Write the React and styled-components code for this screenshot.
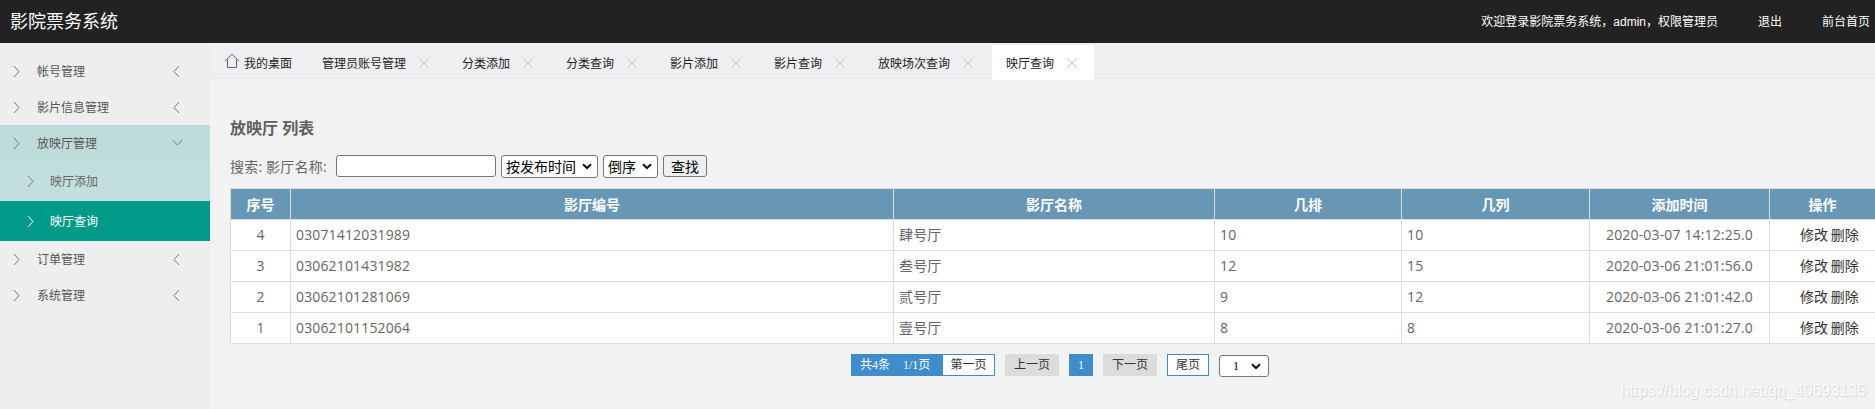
import React from 'react';
import styled, { createGlobalStyle } from 'styled-components';

const arrow = encodeURIComponent('<svg xmlns="http://www.w3.org/2000/svg" width="10" height="7" viewBox="0 0 10 7"><polyline points="1,1.2 5,5 9,1.2" fill="none" stroke="#111" stroke-width="2"/></svg>')

const GlobalStyle = createGlobalStyle`
    html, body {
        margin: 0;
        padding: 0;
        height: 100%;
        overflow: hidden;
        background: #f1f1f1;
    }
    body {
        font-family: "Open Sans", "Noto Sans CJK SC", sans-serif;
        font-size: 12px;
        color: #333;
    }
    * {
        box-sizing: border-box;
    }
`

const Page = styled.div`
    position: relative;
    width: 1875px;
    height: 409px;
    display: flex;
    flex-flow: column nowrap;
    overflow: hidden;
`
const TopBar = styled.header`
    height: 43px;
    flex: none;
    background: #222;
    color: #fff;
    display: flex;
    align-items: center;
    justify-content: space-between;
    padding: 0 5px 3px 10px;
`
const Logo = styled.div`
    font-size: 18px;
`
const TopLinks = styled.div`
    display: flex;
    gap: 40px;
    font-family: "Liberation Sans", "Noto Sans CJK SC", sans-serif;
    font-size: 12px;
`
const TopLink = styled.span``
const Body = styled.div`
    flex: 1;
    display: flex;
    min-height: 0;
`
const Sidebar = styled.aside`
    width: 210px;
    flex: none;
    background: #eee;
    padding-top: 10px;
`
const MenuRow = styled.div`
    height: 36px;
    display: flex;
    align-items: center;
    padding: 0 29px 0 12px;
    color: #555;
    background: ${props => props.$open ? '#bcdbd9' : 'transparent'};
`
const MenuText = styled.span`
    flex: 1;
    margin-left: 16px;
`
const SubRow = styled.div`
    height: 40px;
    display: flex;
    align-items: center;
    padding-left: 26px;
    color: ${props => props.$active ? '#fff' : '#666'};
    background: ${props => props.$active ? '#019a88' : '#c2dedd'};
`
const SubText = styled.span`
    margin-left: 15px;
`
const Main = styled.main`
    flex: 1;
    min-width: 0;
    display: flex;
    flex-flow: column nowrap;
`
const TabBar = styled.nav`
    height: 36px;
    flex: none;
    display: flex;
    padding-top: 2px;
    background: #efeff1;
    border-bottom: 1px solid #e4e5e9;
`
const Tab = styled.div`
    height: 35px;
    margin-right: 2px;
    padding: 0 ${props => props.$home ? 14 : 40}px 0 14px;
    position: relative;
    display: flex;
    align-items: center;
    flex: none;
    color: #222;
    background: ${props => props.$active ? '#fff' : 'transparent'};
`
const CloseMark = styled.svg`
    position: absolute;
    right: 17px;
    top: 13px;
    width: 10px;
    height: 10px;
`
const HomeMark = styled.svg`
    width: 16px;
    height: 16px;
    margin-right: 4px;
    margin-top: -3px;
`
const Content = styled.section`
    flex: 1;
    padding: 38px 0 0 20px;
    background: #f2f2f2;
`
const Title = styled.h2`
    margin: 0 0 16px;
    font-size: 16px;
    line-height: 22px;
    font-weight: bold;
    color: #5f5f5f;
`
const SearchRow = styled.div`
    height: 22px;
    display: flex;
    align-items: center;
    font-size: 14px;
    color: #666;
    margin-bottom: 11px;
`
const SearchLabel = styled.span`
    width: 106px;
    flex: none;
    letter-spacing: 0.2px;
`
const SearchInput = styled.input`
    width: 160px;
    height: 22px;
    margin-right: 5px;
    border: 1px solid #767676;
    border-radius: 3px;
    background: #fff;
`
const SearchSelect = styled.select`
    appearance: none;
    height: 23px;
    width: ${props => props.$width}px;
    margin-right: 5px;
    padding: 0 0 0 4px;
    font: 14px "Open Sans", "Noto Sans CJK SC", sans-serif;
    color: #000;
    background: #fff url("data:image/svg+xml,${arrow}") no-repeat right 5px center;
    border: 1px solid #767676;
    border-radius: 3px;
`
const SearchButton = styled.button`
    width: 44px;
    height: 22px;
    padding: 0;
    font: 14px "Open Sans", "Noto Sans CJK SC", sans-serif;
    color: #000;
    background: #efefef;
    border: 1px solid #767676;
    border-radius: 3px;
`
const Table = styled.table`
    width: 1645px;
    table-layout: fixed;
    border-collapse: collapse;
    background: #fff;
`
const HeadCell = styled.th`
    height: 31px;
    padding: 0 0 1px;
    font-size: 14px;
    font-weight: bold;
    color: #fff;
    background: #6897b5;
    border: 1px solid #ddd;
`
const Cell = styled.td`
    height: 31px;
    padding: 0 5px 2px;
    font-size: 14px;
    letter-spacing: 0.15px;
    color: #666;
    text-align: ${props => props.$center ? 'center' : 'left'};
    border: 1px solid #ddd;
`
const ActionCell = styled.td`
    height: 31px;
    padding: 0 0 2px 30px;
    font-size: 14px;
    word-spacing: -1px;
    color: #333;
    white-space: nowrap;
    border: 1px solid #ddd;
`
const Pager = styled.div`
    display: flex;
    align-items: flex-start;
    margin: 10px 0 0 621px;
    font-family: "Liberation Serif", "Noto Sans CJK SC", serif;
    font-size: 12px;
    line-height: 20px;
`
const PagerInfo = styled.span`
    height: 22px;
    width: 91px;
    display: flex;
    gap: 13px;
    padding: 1px 0 0 9px;
    color: #fff;
    background: #3f8ccb;
`
const PagerBox = styled.span`
    height: 22px;
    width: ${props => props.$width}px;
    margin-right: ${props => props.$gap}px;
    text-align: center;
    line-height: ${props => props.$outlined ? 20 : 22}px;
    color: ${props => props.$current ? '#fff' : '#333'};
    background: ${props => props.$current ? '#3f8ccb' : props.$outlined ? '#fff' : '#dcdcdc'};
    border: ${props => props.$outlined ? '1px solid #3f8ccb' : 'none'};
`
const PagerSelect = styled.select`
    appearance: none;
    width: 50px;
    height: 22px;
    margin-top: 1px;
    padding: 0 0 0 13px;
    font: 12px "Liberation Serif", serif;
    color: #000;
    background: #fff url("data:image/svg+xml,${arrow}") no-repeat right 7px center;
    border: 1px solid #767676;
    border-radius: 3px;
`
const Watermark = styled.div`
    position: absolute;
    right: 9px;
    bottom: 9px;
    font: 16px "Liberation Sans", sans-serif;
    color: rgba(255, 255, 255, 0.8);
    text-shadow: 1px 1px 1px rgba(185, 185, 185, 0.55);
`

const Chevron = ({ dir, color = '#777' }) => {
    const points = {
        right: '2,1 7,6.5 2,12',
        left: '7,1 2,6.5 7,12',
        down: '0.5,3 5.5,8 10.5,3',
    }
    const down = dir === 'down'
    return (
        <svg
            width={down ? 11 : 9}
            height="13"
            viewBox={down ? '0 0 11 13' : '0 0 9 13'}
            style={down ? { marginRight: -2 } : undefined}
        >
            <polyline points={points[dir]} fill="none" stroke={color} strokeWidth="1" />
        </svg>
    )
}

const menusTop = ['帐号管理', '影片信息管理']
const menusBottom = ['订单管理', '系统管理']
const tabs = ['管理员账号管理', '分类添加', '分类查询', '影片添加', '影片查询', '放映场次查询', '映厅查询']
const columns = [
    ['序号', 60], ['影厅编号', 603], ['影厅名称', 321], ['几排', 187], ['几列', 188], ['添加时间', 180], ['操作', 106],
]
const rows = [
    [4, '03071412031989', '肆号厅', 10, 10, '2020-03-07 14:12:25.0'],
    [3, '03062101431982', '叁号厅', 12, 15, '2020-03-06 21:01:56.0'],
    [2, '03062101281069', '贰号厅', 9, 12, '2020-03-06 21:01:42.0'],
    [1, '03062101152064', '壹号厅', 8, 8, '2020-03-06 21:01:27.0'],
]

const App = () => (
    <Page>
        <GlobalStyle />
        <TopBar>
            <Logo>影院票务系统</Logo>
            <TopLinks>
                <TopLink>欢迎登录影院票务系统，admin，权限管理员</TopLink>
                <TopLink>退出</TopLink>
                <TopLink>前台首页</TopLink>
            </TopLinks>
        </TopBar>
        <Body>
            <Sidebar>
                {menusTop.map(name => (
                    <MenuRow key={name}>
                        <Chevron dir="right" />
                        <MenuText>{name}</MenuText>
                        <Chevron dir="left" />
                    </MenuRow>
                ))}
                <MenuRow $open>
                    <Chevron dir="right" />
                    <MenuText>放映厅管理</MenuText>
                    <Chevron dir="down" />
                </MenuRow>
                <SubRow>
                    <Chevron dir="right" />
                    <SubText>映厅添加</SubText>
                </SubRow>
                <SubRow $active>
                    <Chevron dir="right" color="#fff" />
                    <SubText>映厅查询</SubText>
                </SubRow>
                {menusBottom.map(name => (
                    <MenuRow key={name}>
                        <Chevron dir="right" />
                        <MenuText>{name}</MenuText>
                        <Chevron dir="left" />
                    </MenuRow>
                ))}
            </Sidebar>
            <Main>
                <TabBar>
                    <Tab $home>
                        <HomeMark viewBox="0 0 16 16">
                            <path d="M1 8 L8 1.2 L15 8 M3.5 6.5 V14.5 H12.5 V6.5" fill="none" stroke="#667" strokeWidth="1" />
                        </HomeMark>
                        我的桌面
                    </Tab>
                    {tabs.map((t, i) => (
                        <Tab key={t} $active={i === tabs.length - 1}>
                            {t}
                            <CloseMark viewBox="0 0 10 10">
                                <path d="M0.5 0.5 L9.5 9.5 M9.5 0.5 L0.5 9.5" stroke="#c4c4c4" strokeWidth="1" />
                            </CloseMark>
                        </Tab>
                    ))}
                </TabBar>
                <Content>
                    <Title>放映厅 列表</Title>
                    <SearchRow>
                        <SearchLabel>搜索: 影厅名称:</SearchLabel>
                        <SearchInput type="text" />
                        <SearchSelect $width={97}><option>按发布时间</option></SearchSelect>
                        <SearchSelect $width={55}><option>倒序</option></SearchSelect>
                        <SearchButton>查找</SearchButton>
                    </SearchRow>
                    <Table>
                        <colgroup>
                            {columns.map(([name, width]) => <col key={name} width={width} />)}
                        </colgroup>
                        <thead>
                            <tr>
                                {columns.map(([name]) => <HeadCell key={name}>{name}</HeadCell>)}
                            </tr>
                        </thead>
                        <tbody>
                            {rows.map(r => (
                                <tr key={r[0]}>
                                    <Cell $center>{r[0]}</Cell>
                                    <Cell>{r[1]}</Cell>
                                    <Cell>{r[2]}</Cell>
                                    <Cell>{r[3]}</Cell>
                                    <Cell>{r[4]}</Cell>
                                    <Cell $center>{r[5]}</Cell>
                                    <ActionCell>修改 删除</ActionCell>
                                </tr>
                            ))}
                        </tbody>
                    </Table>
                    <Pager>
                        <PagerInfo><span>共4条</span><span>1/1页</span></PagerInfo>
                        <PagerBox $outlined $width={53} $gap={10}>第一页</PagerBox>
                        <PagerBox $width={54} $gap={10}>上一页</PagerBox>
                        <PagerBox $current $width={24} $gap={10}>1</PagerBox>
                        <PagerBox $width={54} $gap={10}>下一页</PagerBox>
                        <PagerBox $outlined $width={42} $gap={10}>尾页</PagerBox>
                        <PagerSelect><option>1</option></PagerSelect>
                    </Pager>
                </Content>
            </Main>
        </Body>
        <Watermark>https://blog.csdn.net/qq_40693135</Watermark>
    </Page>
)

export default App
